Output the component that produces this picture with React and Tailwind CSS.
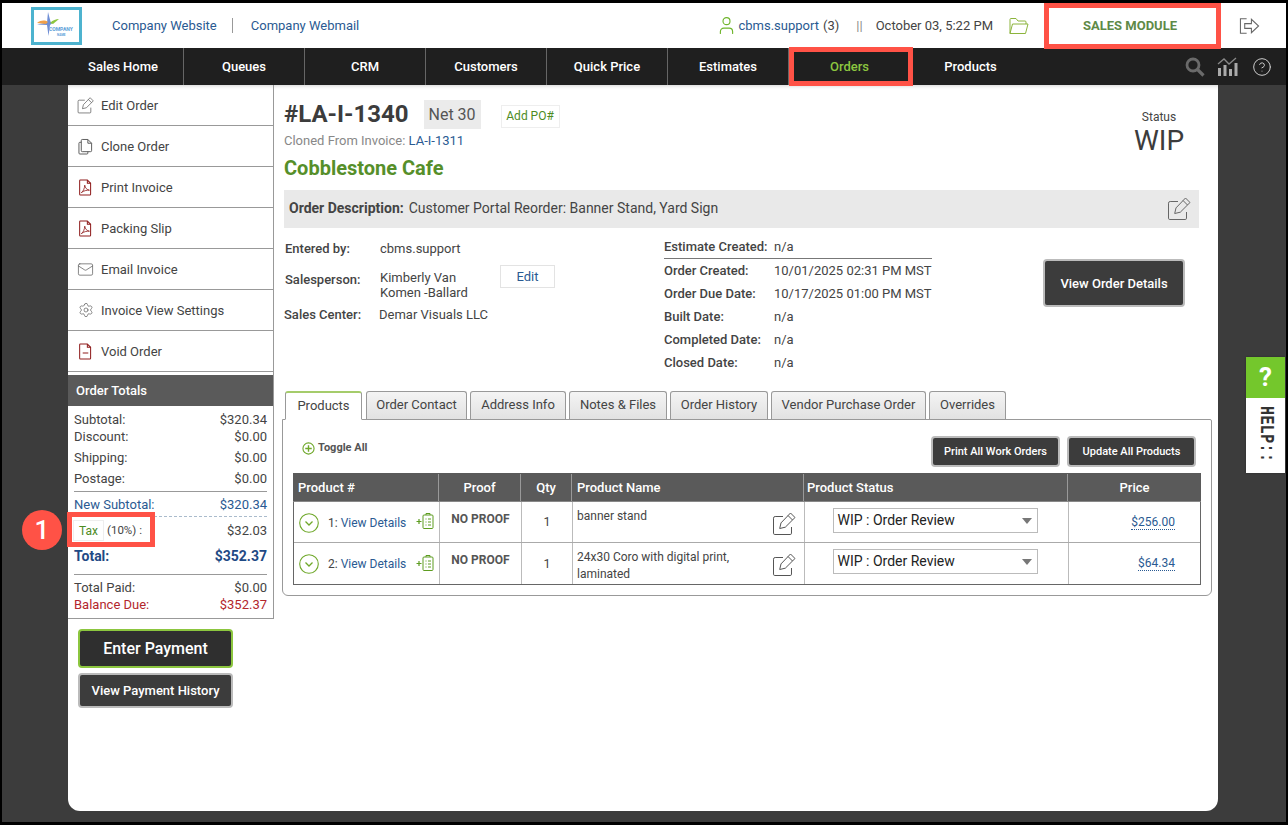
import React from "react";
import { Mail, Settings, User, CircleHelp } from "lucide-react";

const Edit = ({ className = "", size = 24 }) => (
  <svg viewBox="0 0 24 24" width={size} height={size} fill="none" stroke="currentColor" strokeWidth="1" className={className}>
    <path d="M11 4.500H3.200A1.700 1.700 0 0 0 1.500 6.200v15a1.300 1.300 0 0 0 1.300 1.300h15.400a1.300 1.300 0 0 0 1.300-1.300V15" />
    <path d="M18.500 1l4.500 4.500-9.700 9.700-5.600 1.300 1.300-5.600z" />
    <path d="M16 3.500l4.500 4.500" />
  </svg>
);

const Clone = () => (
  <svg viewBox="0 0 16 18" width="15" height="17" fill="none" stroke="#555" strokeWidth="1">
    <path d="M4.500 1.500h6l4 4v8a1 1 0 0 1-1 1h-9a1 1 0 0 1-1-1v-11a1 1 0 0 1 1-1z" />
    <path d="M10.500 1.500v4h4" />
    <path d="M3.500 4.500h-1.500a1 1 0 0 0-1 1v10.500a1 1 0 0 0 1 1h7.500a1 1 0 0 0 1-1v-1.500" />
  </svg>
);

const Pdf = () => (
  <svg viewBox="0 0 14 18" width="13" height="17" fill="none" stroke="#8f1d1d" strokeWidth="1.100">
    <path d="M1.500 1h7.500l3.500 3.500v11.700a.8.8 0 0 1-.8.8H1.500a.8.8 0 0 1-.8-.8V1.800a.8.8 0 0 1 .8-.8z" />
    <path d="M9 1v3.500h3.500" />
    <path d="M2.500 14.500c2-1 3.500-4.500 3.700-8 .3 3 2.500 5 5 5.400-3-.2-6 .6-8.700 2.600z" strokeWidth="0.900" />
  </svg>
);

const VoidDoc = () => (
  <svg viewBox="0 0 14 18" width="13" height="17" fill="none" stroke="#8f1d1d" strokeWidth="1.100">
    <path d="M1.500 1h7.500l3.500 3.500v11.700a.8.8 0 0 1-.8.8H1.500a.8.8 0 0 1-.8-.8V1.800a.8.8 0 0 1 .8-.8z" />
    <path d="M9 1v3.500h3.500M4 10.500h6" />
  </svg>
);

const menu = [
  ["Edit Order", <Edit size={17} className="text-[#555]" />],
  ["Clone Order", <Clone />],
  ["Print Invoice", <Pdf />],
  ["Packing Slip", <Pdf />],
  ["Email Invoice", <Mail size={17} strokeWidth={1} className="text-[#555]" />],
  ["Invoice View Settings", <Settings size={16} strokeWidth={1} className="text-[#555]" />],
  ["Void Order", <VoidDoc />],
];

const navItems = ["Sales Home", "Queues", "CRM", "Customers", "Quick Price", "Estimates", "Orders", "Products"];

const tabs = [
  ["Order Contact", "w-[101px]"],
  ["Address Info", "w-[96px]"],
  ["Notes & Files", "w-[98px]"],
  ["Order History", "w-[98px]"],
  ["Vendor Purchase Order", "w-[155px]"],
  ["Overrides", "w-[77px]"],
];

const dates = [
  ["Order Created:", "10/01/2025 02:31 PM MST"],
  ["Order Due Date:", "10/17/2025 01:00 PM MST"],
  ["Built Date:", "n/a"],
  ["Completed Date:", "n/a"],
  ["Closed Date:", "n/a"],
];

const Money = ({ label, value, className = "", labelClass = "" }) => (
  <div className={`flex justify-between h-[17px] leading-[17px] ${className}`}>
    <span className={labelClass}>{label}</span>
    <span>{value}</span>
  </div>
);

const Row = ({ n, name, price, last }) => (
  <div className={`grid grid-cols-[146px_82px_51px_232px_264px_133px] h-[41px] ${last ? "" : "border-b border-[#aaa]"}`}>
    <div className="flex items-center border-r border-[#bbb] pl-[5px] pt-px">
      <svg viewBox="0 0 20 20" width="20" height="20" fill="none" stroke="#6fa82a" strokeWidth="1.100">
        <circle cx="10" cy="10" r="9.300" />
        <path d="M6.500 8.500l3.500 3.500 3.500-3.500" strokeWidth="1.300" />
      </svg>
      <span className="ml-[9px] text-[12px] text-[#444]">
        {n}: <span className="text-[#2a5a92]">View Details</span>
      </span>
      <svg viewBox="0 0 18 18" width="18" height="18" fill="none" stroke="#5d9c20" strokeWidth="1" className="ml-[10px] -mt-[3px]">
        <path d="M0.500 9.500h5M3 7v5" strokeWidth="1.200" />
        <rect x="7" y="3" width="10" height="13.500" rx="1" />
        <path d="M10 3V1.500h4V3M9.500 7h1M12 7h3M9.500 10h1M12 10h3M9.500 13h1M12 13h3" />
      </svg>
    </div>
    <div className="flex justify-center border-r border-[#bbb] pt-[10px] text-[12px] font-bold text-[#555] leading-[14px]">NO PROOF</div>
    <div className="flex items-center justify-center border-r border-[#bbb] text-[12.500px] text-[#444] pt-px">1</div>
    <div className="flex justify-between border-r border-[#bbb] pl-[4px] pr-[8px] text-[12px] text-[#444] leading-[17px]">
      <div className="w-[190px] pt-[6px]">{name}</div>
      <Edit size={24} className="text-[#555] mt-[10px]" />
    </div>
    <div className="flex justify-center border-r border-[#bbb] pt-[6px] pr-[3px]">
      <div className="flex items-center justify-between w-[205px] h-[25px] border border-[#bbb] pl-[4px] pr-[5px] text-[14px] text-[#222]">
        WIP : Order Review
        <span className="w-0 h-0 border-x-[5px] border-x-transparent border-t-[6px] border-t-[#777]" />
      </div>
    </div>
    <div className="flex justify-end items-center pr-[27px]">
      <span className="text-[12px] text-[#2a5a92] border-b border-dotted border-[#2a5a92] leading-[14px]">{price}</span>
    </div>
  </div>
);

export default function App() {
  return (
    <div className="relative w-[1288px] h-[825px] bg-black pt-[3px] px-[2px] pb-[3px] overflow-hidden [font-family:Roboto,sans-serif] text-[13px] text-[#444]">
      <div className="flex flex-col h-full bg-[#3c3c3c]">
        {/* top bar */}
        <header className="flex items-center h-[45px] bg-white shrink-0">
          <div className="ml-[29px] w-[51px] h-[38px] border-[3px] border-[#4db3cf] bg-white flex flex-col items-center justify-center">
            <svg viewBox="0 0 45 32" width="45" height="32">
              <path d="M14 2l2.500 9.500 1.500 2-2 1.500-1.500 11-1.500-11-10-.5 10-2z" fill="#6f8fd6" />
              <path d="M3 13c4-3 8-3 11-1l-2 2z" fill="#f0a04a" />
              <path d="M16 13c3-3 6-4 9-4l-6 5z" fill="#8cc63f" />
              <text x="15" y="21" fontSize="5" fontWeight="700" fill="#5aa0d8">COMPANY</text>
              <text x="23" y="26" fontSize="3" fontWeight="700" fill="#5aa0d8">NAME</text>
            </svg>
          </div>
          <a className="ml-[30px] text-[13px] text-[#2a5a92]">Company Website</a>
          <span className="ml-[15px] w-px h-[15px] bg-[#999]" />
          <a className="ml-[18px] text-[13px] text-[#2a5a92]">Company Webmail</a>
          <div className="ml-auto flex items-center">
            <User size={21} strokeWidth={1.300} className="text-[#6fb52c]" />
            <span className="ml-px text-[#2a5a92]">cbms.support</span>
            <span className="ml-[4px]">(3)</span>
            <span className="ml-[17px] text-[#888]">||</span>
            <span className="ml-[13px]">October 03, 5:22 PM</span>
            <svg viewBox="0 0 21 18" width="21" height="18" fill="none" stroke="#8cb43c" strokeWidth="1" className="ml-[15px]">
              <path d="M2 16.500V2.500a1 1 0 0 1 1-1h5l2 2.500h7a1 1 0 0 1 1 1V7" />
              <path d="M2 16.500l2.500-9.500h15.500l-2.500 9.500z" />
            </svg>
            <span className="w-[174px] pr-[4px] text-center font-bold text-[13px] text-[#5f8a47] ml-[16px]">SALES MODULE</span>
            <svg viewBox="0 0 22 18" width="21" height="18" fill="none" stroke="#666" strokeWidth="1.100" className="ml-[20px] mr-[26px]">
              <path d="M8 1.500H1.500v15H8" />
              <path d="M6 6.500h7V2l7.500 7-7.500 7v-4.500H6z" />
            </svg>
          </div>
        </header>

        {/* nav */}
        <nav className="flex items-center h-[37px] bg-[#1f1f1f] shrink-0 pl-[61px]">
          {navItems.map((t, i) => (
            <div
              key={t}
              className={`flex items-center justify-center w-[121px] h-full text-[13px] font-medium ${t === "Orders" ? "text-[#8cc63f]" : "text-white"} ${i < 6 ? "border-r border-[#666]" : ""}`}
            >
              {t}
            </div>
          ))}
          <div className="ml-auto flex items-center mr-[14px]">
            <svg viewBox="0 0 20 20" width="20" height="20" fill="none" stroke="#6a6a6a">
              <circle cx="8" cy="8" r="6" strokeWidth="2.800" />
              <path d="M12.500 12.500l6 6" strokeWidth="3.200" />
            </svg>
            <svg viewBox="0 0 22 20" width="22" height="20" className="ml-[12px]" fill="#aaa">
              <rect x="1" y="11" width="3" height="8" />
              <rect x="6.500" y="8" width="3" height="11" />
              <rect x="12" y="12" width="3" height="7" />
              <rect x="17.500" y="6" width="3" height="13" />
              <path d="M1 7l6-5 5 5 7-6" fill="none" stroke="#888" strokeWidth="1.300" />
            </svg>
            <CircleHelp size={20} strokeWidth={1.200} className="ml-[13px] text-[#ccc]" />
          </div>
        </nav>

        {/* page */}
        <div className="flex ml-[66px] w-[1150px] h-[726px] bg-white rounded-b-[12px] shadow-[inset_0_5px_5px_-5px_rgba(0,0,0,0.25)] shrink-0">
          {/* sidebar */}
          <aside className="w-[206px] shrink-0">
            <div className="border-r border-[#999]">
              {menu.map(([t, icon]) => (
                <div key={t} className="flex items-center h-[41px] border-b border-[#999]">
                  <span className="flex justify-center w-[33px] pl-[2px]">{icon}</span>
                  <span className="text-[#444] pt-[2px]">{t}</span>
                </div>
              ))}
              <div className="mt-[3px] flex items-center h-[31px] bg-[#5a5a5a] pl-[8px] text-white font-medium">Order Totals</div>
              <div className="h-[213px] border-b border-[#999] px-[6px] pt-[5px] text-[13px]">
                <Money label="Subtotal:" value="$320.34" />
                <Money label="Discount:" value="$0.00" />
                <Money label="Shipping:" value="$0.00" className="mt-[4px]" />
                <Money label="Postage:" value="$0.00" className="mt-[4px]" />
                <div className="mt-[4px] border-t border-[#999]" />
                <Money label="New Subtotal:" value="$320.34" className="mt-[4px] text-[#2a5a92]" />
                <div className="mt-[3px] border-t border-dashed border-[#aabbcc]" />
                <div className="flex items-center justify-between h-[21px] mt-[3px]">
                  <div className="flex items-center">
                    <span className="flex items-center justify-center w-[31px] h-[21px] -ml-px border border-[#eee] text-[12px] text-[#4d8c1f]">Tax</span>
                    <span className="ml-[3px] text-[11.500px]">(10%) :</span>
                  </div>
                  <span>$32.03</span>
                </div>
                <div className="flex justify-between h-[17px] leading-[17px] mt-[7px] font-bold text-[14px] text-[#1f4a85]">
                  <span>Total:</span>
                  <span>$352.37</span>
                </div>
                <div className="mt-[9px] border-t border-[#999]" />
                <Money label="Total Paid:" value="$0.00" className="mt-[4px]" />
                <Money label="Balance Due:" value="$352.37" className="text-[#b3262c]" />
              </div>
            </div>
            <div className="flex flex-col items-start pl-[10px] pt-[10px] gap-[5px]">
              <button className="flex items-center justify-center w-[155px] h-[39px] rounded-[4px] border-2 border-[#8cc63f] bg-[#2f2f2f] text-white text-[16px] font-medium">Enter Payment</button>
              <button className="flex items-center justify-center w-[155px] h-[35px] rounded-[4px] border-2 border-[#bbb] bg-[#3c3c3c] text-white text-[13px] font-medium">View Payment History</button>
            </div>
          </aside>

          {/* main */}
          <main className="w-[938px] pl-[8px]">
            <section className="ml-[2px] w-[915px]">
              <div className="flex justify-between h-[105px] pt-[15px]">
                <div>
                  <div className="flex items-center h-[29px]">
                    <h1 className="text-[24px] font-bold text-[#3c3c3c] leading-none -mt-[2px]">#LA-I-1340</h1>
                    <span className="ml-[15px] flex items-center justify-center w-[57px] h-[29px] bg-[#ebebeb] text-[16px] text-[#555]">Net 30</span>
                    <span className="ml-[20px] mt-[3px] flex items-center justify-center w-[59px] h-[23px] border border-[#eee] text-[12px] text-[#4d8c1f]">Add PO#</span>
                  </div>
                  <div className="flex items-center h-[22px] pt-px text-[13px] text-[#888]">
                    Cloned From Invoice:&nbsp;<span className="text-[#2a5a92]">LA-I-1311</span>
                  </div>
                  <h2 className="flex items-center h-[34px] text-[20px] font-bold text-[#568f2a]">Cobblestone Cafe</h2>
                </div>
                <div className="flex flex-col items-center w-[80px]">
                  <span className="mt-[10px] text-[12px] leading-[14px] text-[#444]">Status</span>
                  <span className="text-[28px] leading-[33px] text-[#3c3c3c]">WIP</span>
                </div>
              </div>
              <div className="flex items-center justify-between h-[38px] bg-[#e9e9e9] pl-[5px] pr-[8px]">
                <p className="text-[14px] leading-[18px] -mt-[2px]">
                  <b className="font-bold text-[#444] text-[14px]">Order Description:</b>
                  <span className="ml-[5px] text-[#444]">Customer Portal Reorder: Banner Stand, Yard Sign</span>
                </p>
                <Edit size={24} className="text-[#666]" />
              </div>
              <div className="flex h-[163px]">
                <div className="relative w-[380px] pl-px pt-[12px]">
                  <div className="flex h-[17px] items-center">
                    <b className="w-[95px] font-medium">Entered by:</b>
                    <span>cbms.support</span>
                  </div>
                  <div className="flex mt-[12px]">
                    <b className="w-[95px] font-medium leading-[15px] pt-[3px]">Salesperson:</b>
                    <span className="w-[120px] leading-[15px] pt-[1px]">Kimberly Van Komen -Ballard</span>
                    <span className="flex items-center justify-center w-[55px] h-[23px] -mt-[4px] border border-[#e3e3e3] text-[#2a5a92]">Edit</span>
                  </div>
                  <div className="flex h-[17px] items-center mt-[6px]">
                    <b className="w-[95px] -ml-px font-medium">Sales Center:</b>
                    <span>Demar Visuals LLC</span>
                  </div>
                </div>
                <div className="w-[268px] pt-[11px]">
                  <div className="flex h-[20px] items-start border-b border-[#777] leading-[16px]">
                    <b className="w-[110px] font-medium">Estimate Created:</b>
                    <span>n/a</span>
                  </div>
                  {dates.map(([a, b]) => (
                    <div key={a} className="flex h-[23px] items-center first:mt-[1px]">
                      <b className="w-[110px] font-medium">{a}</b>
                      <span className="whitespace-nowrap">{b}</span>
                    </div>
                  ))}
                </div>
                <div className="pl-[111px] pt-[31px]">
                  <button className="flex items-center justify-center w-[142px] h-[48px] pt-px rounded-[4px] border-2 border-[#bbb] bg-[#3c3c3c] text-white font-medium whitespace-nowrap">View Order Details</button>
                </div>
              </div>
            </section>

            {/* tabs */}
            <div className="flex items-end h-[28px] ml-[3px] gap-[3px] relative z-10">
              <div className="flex items-center justify-center w-[77px] h-[29px] -mb-px rounded-t-[3px] border border-[#999] border-b-white border-t-[#a5cc6b] border-t-2 bg-white text-[13px]">Products</div>
              {tabs.map(([t, w], i) => (
                <div key={t} className={`flex items-center justify-center ${w} ${i === 0 ? "ml-px" : ""} h-[28px] rounded-t-[3px] border border-[#999] border-b-0 bg-gradient-to-b from-[#f4f4f4] to-[#e2e2e2] text-[13px] pb-[2px]`}>{t}</div>
              ))}
            </div>
            <div className="w-[930px] h-[177px] border border-[#999] rounded-b-[6px] rounded-tr-[2px] px-[10px]">
              <div className="flex justify-between h-[53px] pt-[16px] pr-[5px]">
                <div className="flex items-start pl-[9px] pt-[5px]">
                  <svg viewBox="0 0 14 14" width="13" height="13" fill="none" stroke="#6fa82a" strokeWidth="1.200" className="mt-[1px]">
                    <circle cx="7" cy="7" r="6" />
                    <path d="M7 3.500v7M3.500 7h7" strokeWidth="1.500" />
                  </svg>
                  <span className="ml-[3px] font-bold text-[11px] text-[#555] leading-[14px]">Toggle All</span>
                </div>
                <div className="flex gap-[7px]">
                  <button className="flex items-center justify-center w-[129px] h-[31px] pt-px rounded-[4px] border-2 border-[#bbb] bg-[#3c3c3c] text-white text-[11px] font-medium">Print All Work Orders</button>
                  <button className="flex items-center justify-center w-[129px] h-[31px] pt-px rounded-[4px] border-2 border-[#bbb] bg-[#3c3c3c] text-white text-[11px] font-medium">Update All Products</button>
                </div>
              </div>
              <div className="w-[908px] border-x border-b border-[#666]">
                <div className="grid grid-cols-[146px_82px_51px_232px_264px_133px] h-[29px] -mx-px w-[908px] pt-px bg-[#5a5a5a] text-white text-[13px] font-medium border-b border-[#888]">
                  <div className="flex items-center pl-[5px] border-r border-[#999]">Product #</div>
                  <div className="flex items-center justify-center border-r border-[#999]">Proof</div>
                  <div className="flex items-center justify-center border-r border-[#999]">Qty</div>
                  <div className="flex items-center pl-[5px] border-r border-[#999]">Product Name</div>
                  <div className="flex items-center pl-[3px] border-r border-[#999]">Product Status</div>
                  <div className="flex items-center justify-center">Price</div>
                </div>
                <Row n={1} name="banner stand" price="$256.00" />
                <Row n={2} name="24x30 Coro with digital print, laminated" price="$64.34" last />
              </div>
            </div>
          </main>
        </div>
      </div>

      {/* Overlays */}
      <div className="absolute left-[1044px] top-[3px] w-[177px] h-[46px] border-[5px] border-[#ff5246]" />
      <div className="absolute left-[789px] top-[47px] w-[124px] h-[39px] border-[5px] border-[#ff5246]" />
      <div className="absolute left-[67px] top-[512px] w-[88px] h-[35px] border-[5px] border-[#ff5246]" />
      <div className="absolute left-[22px] top-[510px] flex items-center justify-center w-[40px] h-[40px] rounded-full bg-[#ff5246] text-white text-[26px] font-medium">1</div>

      {/* Help tab */}
      <div className="absolute left-[1246px] top-[357px] w-[39px] h-[116px] bg-white shadow-[0_0_2px_rgba(0,0,0,0.3)]">
        <div className="flex items-center justify-center h-[41px] bg-[#74c72c] text-white text-[26px] font-bold">?</div>
        <div className="flex justify-center pt-[8px]">
          <span className="[writing-mode:vertical-rl] scale-x-[1.4] font-bold text-[15px] tracking-[0.4px] text-[#333] leading-none [font-family:'Liberation_Mono',monospace]">HELP::</span>
        </div>
      </div>
    </div>
  );
}
